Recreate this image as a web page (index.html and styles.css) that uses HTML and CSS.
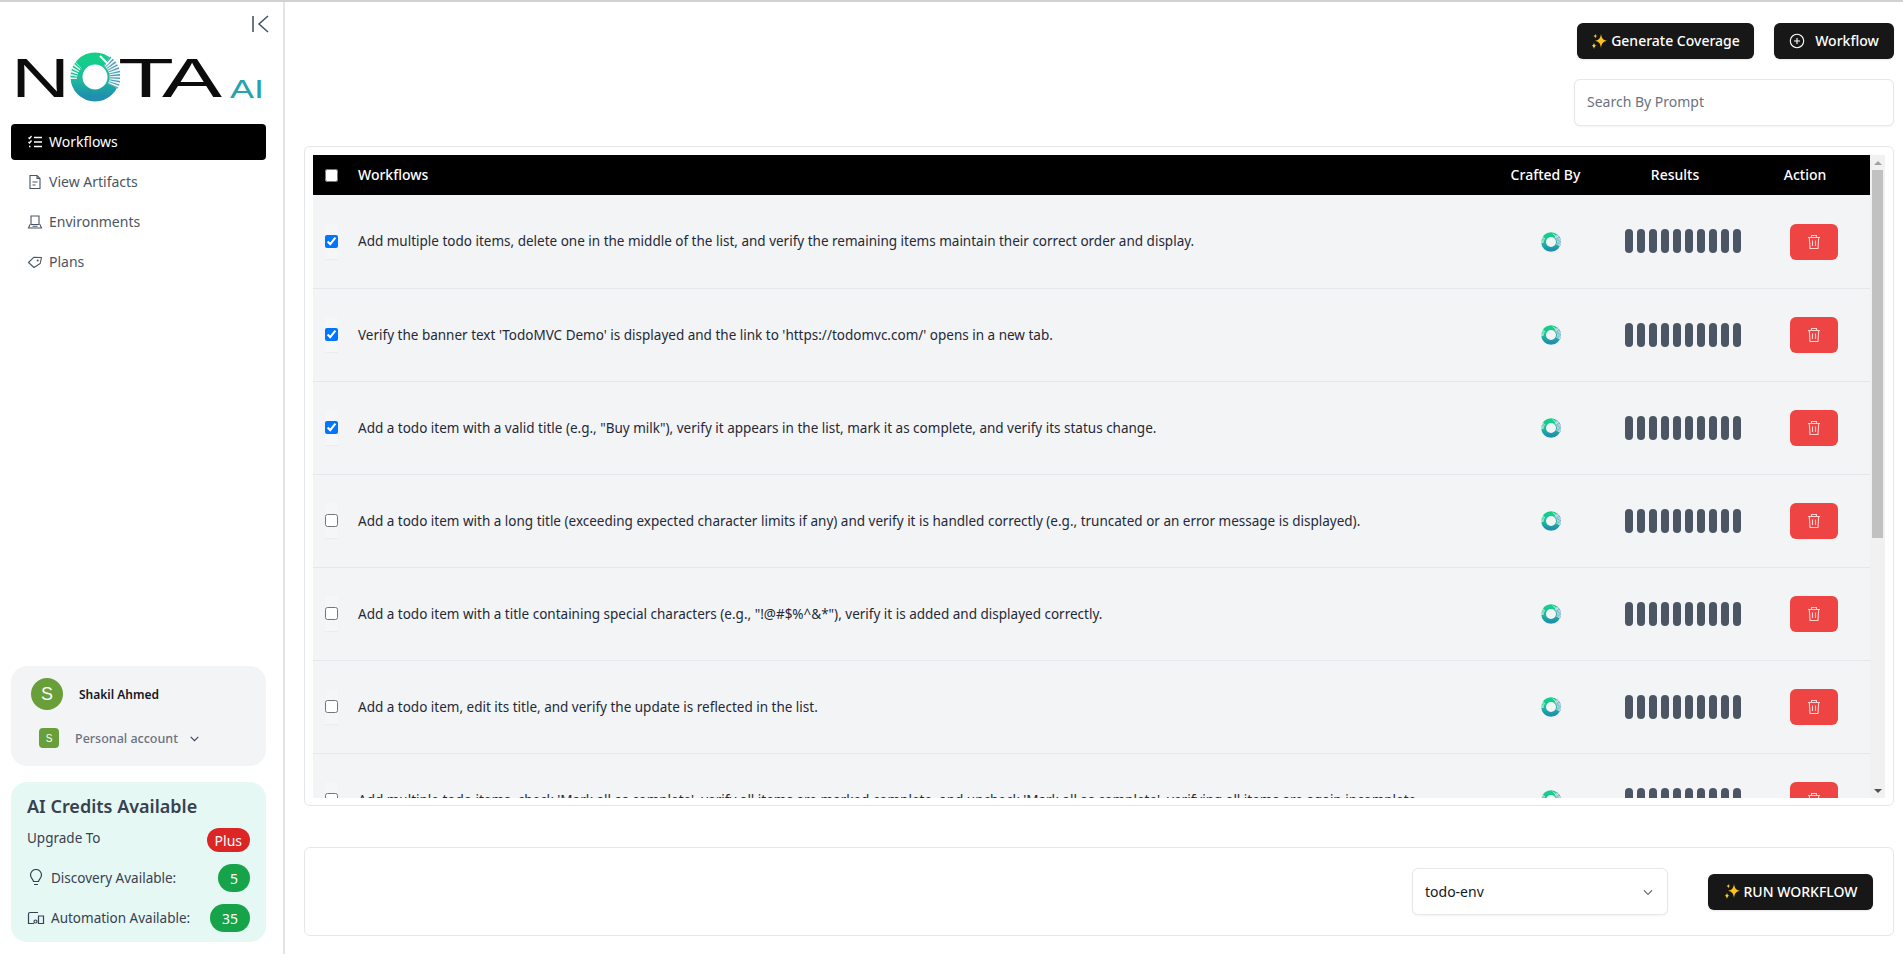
FILE: index.html
```html
<!DOCTYPE html>
<html lang="en">
<head>
    <meta charset="UTF-8">
    <meta name="viewport" content="width=device-width, initial-scale=1.0">
    <title>Workflows - Nota AI</title>
    <link rel="stylesheet" href="styles.css">
</head>
<body>
    <!-- shared icons -->
    <svg class="defs" width="0" height="0" aria-hidden="true">
        <defs>
            <linearGradient id="ringFill" x1="0" y1="0" x2="0" y2="1">
                <stop offset="0" stop-color="#14cf8a"/>
                <stop offset="0.55" stop-color="#1cbc9a"/>
                <stop offset="1" stop-color="#2090ae"/>
            </linearGradient>
            <symbol id="ring" viewBox="0 0 50 50">
                <circle cx="25" cy="25" r="18.5" fill="none" stroke="url(#ringFill)" stroke-width="12"/>
                <path d="M2.500 27a20 20 0 0 1 6-14" fill="none" stroke="#e4f5f1" stroke-width="9" stroke-dasharray="1.6 1.4"/>
                <path d="M37 9a20 20 0 0 1 6 25" fill="none" stroke="#eef7f8" stroke-width="11"/>
                <path d="M37 9a20 20 0 0 1 6 25" fill="none" stroke="#4f9fb5" stroke-width="11" stroke-dasharray="1.200 1.500"/>
                <path d="M30 4l8 8" stroke="#fff" stroke-width="2"/>
            </symbol>
            <symbol id="trash" viewBox="0 0 16 16">
                <path d="M2 3.500h12M5.500 3.500V1.500h5v2M3.300 3.500l.7 11h8l.7-11M6.500 6.500v5.500M9.500 6.500v5.500" fill="none" stroke="currentColor" stroke-width="1.100"/>
            </symbol>
            <symbol id="chevron" viewBox="0 0 24 24">
                <path d="M5 9l7 7 7-7" fill="none" stroke="currentColor" stroke-width="2"/>
            </symbol>
            <symbol id="sparkle" viewBox="0 0 24 24">
                <path d="M15 1.500c1 6.500 3 8.800 9 10.300-6 1.400-8 3.800-9 10.700-1-6.900-3-9.300-9-10.700 6-1.500 8-3.800 9-10.300z" fill="#fcc21b"/>
                <path d="M6.500 1c.4 2.300 1 3.100 3 3.500-2 .5-2.600 1.300-3 3.700-.4-2.400-1-3.200-3-3.700 2-.4 2.600-1.200 3-3.500zM4.500 14.500c.5 3 1.300 3.900 3.800 4.500-2.500.6-3.300 1.600-3.800 5-.5-3.400-1.300-4.400-3.800-5 2.500-.6 3.300-1.500 3.800-4.500z" fill="#fdd835"/>
            </symbol>
        </defs>
    </svg>

    <div class="app">
        <aside class="sidebar">
            <button class="collapse-btn" aria-label="Collapse sidebar">
                <svg width="20" height="20" viewBox="0 0 20 20"><path d="M3 2v16M18 2l-9 8 9 8" fill="none" stroke="#475569" stroke-width="1.600"/></svg>
            </button>

            <div class="logo">
                <svg width="255" height="70" viewBox="0 0 255 70" role="img" aria-label="Nota AI">
                    <text class="logo-word" x="0" y="55" textLength="59" lengthAdjust="spacingAndGlyphs">N</text>
                    <use href="#ring" x="59" y="10" width="50" height="50"/>
                    <text class="logo-word" x="107" y="55" textLength="56" lengthAdjust="spacingAndGlyphs">T</text>
                    <text class="logo-word" x="151" y="55" textLength="60" lengthAdjust="spacingAndGlyphs">A</text>
                    <text class="logo-ai" x="219" y="56" textLength="34" lengthAdjust="spacingAndGlyphs">AI</text>
                </svg>
            </div>

            <nav class="nav">
                <a class="nav-item active" href="#">
                    <svg width="16" height="16" viewBox="0 0 16 16"><path d="M7 3.500h8M7 8h8M7 12.500h8M1.500 3.500l1 1 2-2.500M1.500 8l1 1 2-2.500M2 12.500h1.500" fill="none" stroke="currentColor" stroke-width="1.300"/></svg>
                    <span>Workflows</span>
                </a>
                <a class="nav-item" href="#">
                    <svg width="16" height="16" viewBox="0 0 16 16"><path d="M3 1.500h7l3 3v10H3zM10 1.500v3h3M5.500 8h5M5.500 11h3" fill="none" stroke="currentColor" stroke-width="1.100"/></svg>
                    <span>View Artifacts</span>
                </a>
                <a class="nav-item" href="#">
                    <svg width="16" height="16" viewBox="0 0 16 16"><path d="M4 2h8v8.500H4zM3 10.500l-1.500 3.500h13L13 10.500M5.500 12.300h5" fill="none" stroke="currentColor" stroke-width="1.100"/></svg>
                    <span>Environments</span>
                </a>
                <a class="nav-item" href="#">
                    <svg width="16" height="16" viewBox="0 0 16 16"><path d="M1.500 8.500L7 3.200l7.500.3-1.300 6L7 13.500z" fill="none" stroke="currentColor" stroke-width="1.100" stroke-linejoin="round"/><circle cx="10.700" cy="6.500" r="1" fill="currentColor"/></svg>
                    <span>Plans</span>
                </a>
            </nav>

            <div class="sidebar-bottom">
                <div class="profile-card">
                    <div class="profile-row">
                        <span class="avatar">S</span>
                        <span class="profile-name">Shakil Ahmed</span>
                    </div>
                    <div class="account-row">
                        <span class="avatar-small">S</span>
                        <span class="account-name">Personal account</span>
                        <svg class="account-chevron" width="13" height="13"><use href="#chevron"/></svg>
                    </div>
                </div>

                <div class="credits-card">
                    <h3>AI Credits Available</h3>
                    <div class="credit-row upgrade">
                        <span class="credit-label">Upgrade To</span>
                        <span class="badge badge-red">Plus</span>
                    </div>
                    <div class="credit-row">
                        <span class="credit-label">
                            <svg width="18" height="18" viewBox="0 0 18 18"><path d="M6.500 12.500c0-2-3-3.200-3-6.500a5.500 5.500 0 0 1 11 0c0 3.300-3 4.500-3 6.500zM7 15.500h4" fill="none" stroke="currentColor" stroke-width="1.200"/></svg>
                            Discovery Available:
                        </span>
                        <span class="badge badge-green">5</span>
                    </div>
                    <div class="credit-row">
                        <span class="credit-label">
                            <svg width="18" height="18" viewBox="0 0 18 18"><path d="M11 3.500H3a1.500 1.500 0 0 0-1.500 1.500v9.500H7M11.500 7h5v7.500h-5z" fill="none" stroke="currentColor" stroke-width="1.200"/><circle cx="8.500" cy="12.500" r="1.500" fill="none" stroke="currentColor" stroke-width="1.200"/></svg>
                            Automation Available:
                        </span>
                        <span class="badge badge-green wide">35</span>
                    </div>
                </div>
            </div>
        </aside>

        <main class="main">
            <div class="top-actions">
                <button class="btn-dark"><svg class="spark" width="16" height="16"><use href="#sparkle"/></svg>Generate Coverage</button>
                <button class="btn-dark workflow-btn">
                    <svg width="16" height="16" viewBox="0 0 16 16"><circle cx="8" cy="8" r="6.700" fill="none" stroke="#fff" stroke-width="1.100"/><path d="M8 5v6M5 8h6" stroke="#fff" stroke-width="1.100"/></svg>
                    Workflow
                </button>
            </div>
            <div class="search-row">
                <input class="search" type="text" placeholder="Search By Prompt">
            </div>

            <div class="table-card">
                <div class="table-scroll">
                    <table class="wf-table">
                        <thead>
                            <tr>
                                <th class="col-check"><input type="checkbox"></th>
                                <th class="col-text">Workflows</th>
                                <th class="col-by">Crafted By</th>
                                <th class="col-results">Results</th>
                                <th class="col-action">Action</th>
                            </tr>
                        </thead>
                        <tbody>
                            <tr>
                                <td class="col-check"><span class="check-wrap"><input type="checkbox" checked></span></td>
                                <td class="col-text">Add multiple todo items, delete one in the middle of the list, and verify the remaining items maintain their correct order and display.</td>
                                <td class="col-by"><svg class="by-icon"><use href="#ring"/></svg></td>
                                <td class="col-results"><div class="pills"><i></i><i></i><i></i><i></i><i></i><i></i><i></i><i></i><i></i><i></i></div></td>
                                <td class="col-action"><button class="btn-delete" aria-label="Delete"><svg width="16" height="16"><use href="#trash"/></svg></button></td>
                            </tr>
                            <tr>
                                <td class="col-check"><span class="check-wrap"><input type="checkbox" checked></span></td>
                                <td class="col-text">Verify the banner text 'TodoMVC Demo' is displayed and the link to 'https://todomvc.com/' opens in a new tab.</td>
                                <td class="col-by"><svg class="by-icon"><use href="#ring"/></svg></td>
                                <td class="col-results"><div class="pills"><i></i><i></i><i></i><i></i><i></i><i></i><i></i><i></i><i></i><i></i></div></td>
                                <td class="col-action"><button class="btn-delete" aria-label="Delete"><svg width="16" height="16"><use href="#trash"/></svg></button></td>
                            </tr>
                            <tr>
                                <td class="col-check"><span class="check-wrap"><input type="checkbox" checked></span></td>
                                <td class="col-text">Add a todo item with a valid title (e.g., "Buy milk"), verify it appears in the list, mark it as complete, and verify its status change.</td>
                                <td class="col-by"><svg class="by-icon"><use href="#ring"/></svg></td>
                                <td class="col-results"><div class="pills"><i></i><i></i><i></i><i></i><i></i><i></i><i></i><i></i><i></i><i></i></div></td>
                                <td class="col-action"><button class="btn-delete" aria-label="Delete"><svg width="16" height="16"><use href="#trash"/></svg></button></td>
                            </tr>
                            <tr>
                                <td class="col-check"><span class="check-wrap"><input type="checkbox"></span></td>
                                <td class="col-text">Add a todo item with a long title (exceeding expected character limits if any) and verify it is handled correctly (e.g., truncated or an error message is displayed).</td>
                                <td class="col-by"><svg class="by-icon"><use href="#ring"/></svg></td>
                                <td class="col-results"><div class="pills"><i></i><i></i><i></i><i></i><i></i><i></i><i></i><i></i><i></i><i></i></div></td>
                                <td class="col-action"><button class="btn-delete" aria-label="Delete"><svg width="16" height="16"><use href="#trash"/></svg></button></td>
                            </tr>
                            <tr>
                                <td class="col-check"><span class="check-wrap"><input type="checkbox"></span></td>
                                <td class="col-text">Add a todo item with a title containing special characters (e.g., "!@#$%^&amp;*"), verify it is added and displayed correctly.</td>
                                <td class="col-by"><svg class="by-icon"><use href="#ring"/></svg></td>
                                <td class="col-results"><div class="pills"><i></i><i></i><i></i><i></i><i></i><i></i><i></i><i></i><i></i><i></i></div></td>
                                <td class="col-action"><button class="btn-delete" aria-label="Delete"><svg width="16" height="16"><use href="#trash"/></svg></button></td>
                            </tr>
                            <tr>
                                <td class="col-check"><span class="check-wrap"><input type="checkbox"></span></td>
                                <td class="col-text">Add a todo item, edit its title, and verify the update is reflected in the list.</td>
                                <td class="col-by"><svg class="by-icon"><use href="#ring"/></svg></td>
                                <td class="col-results"><div class="pills"><i></i><i></i><i></i><i></i><i></i><i></i><i></i><i></i><i></i><i></i></div></td>
                                <td class="col-action"><button class="btn-delete" aria-label="Delete"><svg width="16" height="16"><use href="#trash"/></svg></button></td>
                            </tr>
                            <tr>
                                <td class="col-check"><span class="check-wrap"><input type="checkbox"></span></td>
                                <td class="col-text">Add multiple todo items, check 'Mark all as complete', verify all items are marked complete, and uncheck 'Mark all as complete', verifying all items are again incomplete.</td>
                                <td class="col-by"><svg class="by-icon"><use href="#ring"/></svg></td>
                                <td class="col-results"><div class="pills"><i></i><i></i><i></i><i></i><i></i><i></i><i></i><i></i><i></i><i></i></div></td>
                                <td class="col-action"><button class="btn-delete" aria-label="Delete"><svg width="16" height="16"><use href="#trash"/></svg></button></td>
                            </tr>
                        </tbody>
                    </table>
                </div>
                <div class="scrollbar" aria-hidden="true">
                    <span class="scroll-arrow up"></span>
                    <span class="scroll-thumb"></span>
                    <span class="scroll-arrow down"></span>
                </div>
            </div>

            <div class="run-bar">
                <div class="env-select">
                    <span>todo-env</span>
                    <svg width="14" height="14"><use href="#chevron"/></svg>
                </div>
                <button class="btn-dark run-btn"><svg class="spark" width="16" height="16"><use href="#sparkle"/></svg>RUN WORKFLOW</button>
            </div>
        </main>
    </div>
</body>
</html>
```

FILE: styles.css
```css
* {
    margin: 0;
    padding: 0;
    box-sizing: border-box;
}

html, body {
    height: 100%;
    overflow: hidden;
}

body {
    font-family: 'Noto Sans', 'Open Sans', sans-serif;
    font-size: 14px;
    color: #1f2937;
    background: #fff;
    border-top: 2px solid #d1d1d1;
}

.defs {
    position: absolute;
}

.app {
    display: flex;
    height: 952px;
}

/* sidebar */
.sidebar {
    width: 285px;
    flex-shrink: 0;
    border-right: 2px solid #e5e5e5;
    padding: 0 17px 12px 11px;
    display: flex;
    flex-direction: column;
}

.collapse-btn {
    align-self: flex-end;
    background: none;
    border: none;
    height: 20px;
    margin-top: 12px;
    margin-right: -4px;
}

.logo {
    margin-top: 8px;
    height: 70px;
}

.logo svg {
    display: block;
}

.logo-word {
    font-family: 'Liberation Sans', sans-serif;
    font-size: 56px;
    fill: #0c0c0c;
}

.logo-ai {
    font-family: 'Liberation Sans', sans-serif;
    font-size: 26px;
    fill: #25a3ae;
}

.nav {
    margin-top: 12px;
    display: flex;
    flex-direction: column;
    gap: 4px;
}

.nav-item {
    height: 36px;
    border-radius: 4px;
    display: flex;
    align-items: center;
    gap: 6px;
    padding-left: 16px;
    color: #4b5563;
    text-decoration: none;
    font-size: 14px;
}

.nav-item span {
    padding-bottom: 2px;
}

.nav-item.active {
    background: #000;
    color: #fff;
}

.sidebar-bottom {
    margin-top: auto;
    display: flex;
    flex-direction: column;
    gap: 16px;
}

.profile-card {
    height: 100px;
    background: #f3f4f6;
    border-radius: 16px;
    padding: 12px 20px;
}

.profile-row {
    display: flex;
    align-items: center;
    gap: 16px;
}

.avatar {
    width: 32px;
    height: 32px;
    border-radius: 50%;
    background: #689f38;
    color: #fff;
    font-family: 'Liberation Sans', sans-serif;
    font-size: 18px;
    display: flex;
    align-items: center;
    justify-content: center;
}

.profile-name {
    font-size: 12px;
    font-weight: 600;
    color: #111827;
}

.account-row {
    display: flex;
    align-items: center;
    margin-top: 18px;
    padding-left: 8px;
}

.avatar-small {
    width: 20px;
    height: 20px;
    border-radius: 4px;
    background: #689f38;
    color: #fff;
    font-family: 'Liberation Sans', sans-serif;
    font-size: 10px;
    display: flex;
    align-items: center;
    justify-content: center;
}

.account-name {
    font-size: 12.5px;
    font-weight: 500;
    color: #6b7280;
    margin-left: 16px;
}

.account-chevron {
    margin-left: 10px;
    color: #374151;
}

.credits-card {
    height: 160px;
    background: #e6f8f3;
    border-radius: 16px;
    padding: 12px 16px;
}

.credits-card h3 {
    font-size: 18px;
    font-weight: 600;
    color: #374151;
    line-height: 24px;
}

.credit-row {
    display: flex;
    justify-content: space-between;
    align-items: center;
    margin-top: 12px;
    height: 28px;
}

.credit-row.upgrade {
    margin-top: 10px;
    height: 24px;
}

.upgrade .credit-label {
    padding-bottom: 5px;
}

.credit-label {
    display: flex;
    align-items: center;
    gap: 6px;
    color: #374151;
    font-size: 13.5px;
}

.badge {
    color: #fff;
    border-radius: 14px;
    height: 28px;
    min-width: 32px;
    padding: 0 8px;
    display: flex;
    align-items: center;
    justify-content: center;
    font-size: 14px;
}

.badge-red {
    background: #dc2626;
    height: 24px;
    min-width: 43px;
}

.badge-green {
    background: #16a34a;
}

.badge-green.wide {
    min-width: 40px;
}

/* main area */
.main {
    flex: 1;
    min-width: 0;
    padding: 21px 9px 16px 19px;
    display: flex;
    flex-direction: column;
}

.top-actions {
    display: flex;
    justify-content: flex-end;
    gap: 20px;
}

.btn-dark {
    height: 36px;
    padding-bottom: 1px;
    background: #171717;
    color: #fff;
    border: none;
    border-radius: 6px;
    font-family: inherit;
    font-size: 14px;
    font-weight: 500;
    display: flex;
    align-items: center;
    justify-content: center;
    box-shadow: 0 1px 2px rgba(0, 0, 0, 0.1);
}

.top-actions .btn-dark {
    width: 177px;
}

.top-actions .workflow-btn {
    width: 120px;
    gap: 10px;
}

.spark {
    margin-right: 4px;
}

.search-row {
    display: flex;
    justify-content: flex-end;
    margin-top: 20px;
}

.search {
    width: 320px;
    height: 47px;
    border: 1px solid #e5e7eb;
    border-radius: 6px;
    padding: 0 12px 2px;
    font-family: inherit;
    font-size: 14px;
    box-shadow: 0 1px 2px rgba(0, 0, 0, 0.05);
}

.search::placeholder {
    color: #6b7280;
}

.table-card {
    margin-top: 20px;
    height: 660px;
    border: 1px solid #e5e7eb;
    border-radius: 6px;
    padding: 8px;
    display: flex;
}

.table-scroll {
    flex: 1;
    min-width: 0;
    height: 643px;
    overflow: hidden;
    background: #f3f4f6;
}

.scrollbar {
    width: 15px;
    height: 643px;
    flex-shrink: 0;
    background: #f1f1f1;
    display: flex;
    flex-direction: column;
    align-items: center;
}

.scroll-arrow {
    height: 15px;
    width: 15px;
    display: flex;
    align-items: center;
    justify-content: center;
}

.scroll-arrow::after {
    content: "";
    border-left: 4px solid transparent;
    border-right: 4px solid transparent;
}

.scroll-arrow.up::after {
    border-bottom: 4px solid #a3a3a3;
}

.scroll-arrow.down {
    margin-top: auto;
}

.scroll-arrow.down::after {
    border-top: 4px solid #505050;
}

.scroll-thumb {
    width: 11px;
    height: 368px;
    background: #c1c1c1;
}

.wf-table {
    width: 100%;
    border-collapse: collapse;
    table-layout: fixed;
}

.wf-table th {
    height: 40px;
    padding-bottom: 2px;
    background: #000;
    color: #fff;
    font-size: 14px;
    font-weight: 500;
    text-align: center;
}

.wf-table th.col-text {
    text-align: left;
}

.wf-table th.col-action {
    padding-right: 4px;
}

.wf-table th.col-check {
    padding-bottom: 0;
}

.wf-table td {
    height: 93px;
    border-bottom: 1px solid #e5e7eb;
    text-align: center;
    vertical-align: middle;
}

.wf-table td.col-text {
    text-align: left;
    font-size: 13.5px;
    color: #1f2937;
}

.col-check {
    width: 45px;
    padding-right: 8px;
}

.col-by {
    width: 121px;
}

.col-results {
    width: 138px;
}

.col-action {
    width: 126px;
}

.wf-table td.col-by {
    padding-left: 11px;
}

.wf-table td.col-results {
    padding-left: 16px;
}

.wf-table td.col-action {
    padding-left: 14px;
}

.check-wrap {
    display: inline-flex;
    align-items: center;
    vertical-align: middle;
    height: 35px;
    width: 13px;
    background: #f5f6f8;
    box-shadow: 0 1px 1px rgba(0, 0, 0, 0.03);
}

.wf-table input[type="checkbox"] {
    display: block;
    width: 13px;
    height: 13px;
    margin: auto;
}

.by-icon {
    width: 20px;
    height: 20px;
    display: block;
    margin: 1px auto 0;
}

.pills {
    display: flex;
    gap: 4px;
    justify-content: center;
}

.pills i {
    width: 8px;
    height: 24px;
    border-radius: 4px;
    background: #4b5563;
}

.btn-delete {
    width: 48px;
    height: 36px;
    margin-top: 1px;
    background: #ef4444;
    color: #ffd2d2;
    border: none;
    border-radius: 6px;
    display: inline-flex;
    align-items: center;
    justify-content: center;
    vertical-align: middle;
}

.run-bar {
    margin-top: 41px;
    height: 89px;
    border: 1px solid #e5e7eb;
    border-radius: 6px;
    display: flex;
    align-items: center;
    justify-content: flex-end;
    gap: 40px;
    padding-right: 20px;
}

.env-select {
    width: 256px;
    height: 47px;
    border: 1px solid #e5e7eb;
    border-radius: 6px;
    padding: 0 12px;
    display: flex;
    align-items: center;
    justify-content: space-between;
    color: #111827;
    box-shadow: 0 1px 2px rgba(0, 0, 0, 0.05);
}

.env-select svg {
    color: #6b7280;
}

.run-btn {
    width: 165px;
}
```
